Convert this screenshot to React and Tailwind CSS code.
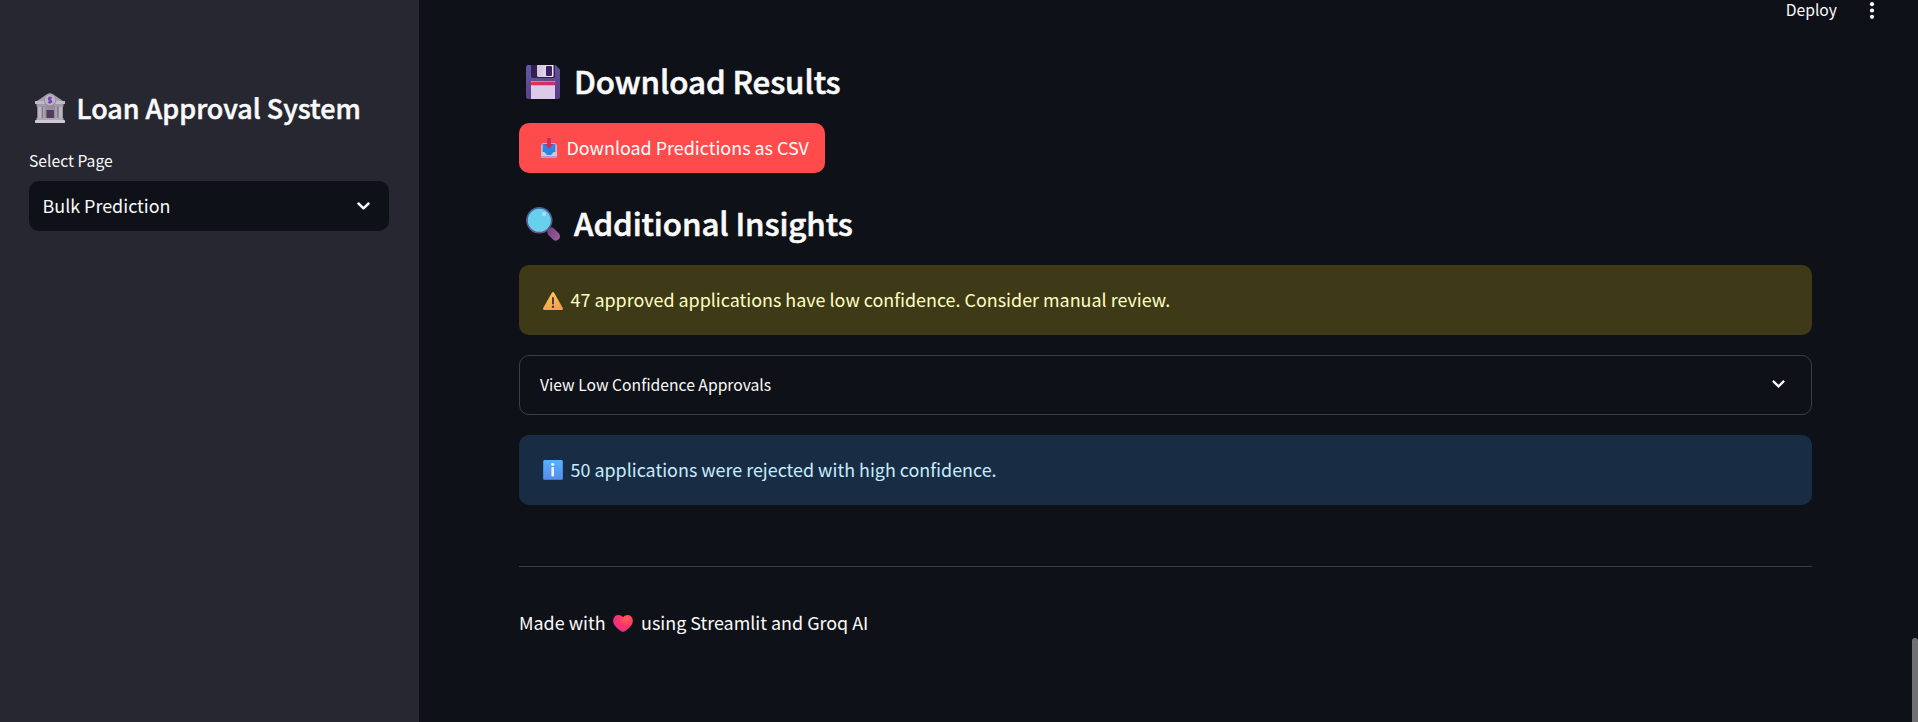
function BankIcon() {
  return (
    <svg viewBox="0 0 30 30" className="h-[30px] w-[30px] shrink-0">
      <rect x="2" y="12" width="26" height="15" fill="#857b8f" />
      <path d="M0.5 9 L12 1.2 Q15 -0.6 18 1.2 L29.5 9 Z" fill="#a79fae" />
      <rect x="0" y="8" width="30" height="3" fill="#c2b9c8" />
      <rect x="1.5" y="11" width="27" height="2.5" fill="#a299a9" />
      <rect x="3" y="13.5" width="3.6" height="12.5" fill="#bdb4c3" />
      <rect x="8" y="13.5" width="2.6" height="12.5" fill="#a79eae" />
      <rect x="19.6" y="13.5" width="2.6" height="12.5" fill="#a79eae" />
      <rect x="23.8" y="13.5" width="3.6" height="12.5" fill="#bdb4c3" />
      <rect x="10.6" y="14" width="9" height="12" fill="#998fa1" />
      <rect x="11.5" y="17" width="7.4" height="9.5" fill="#4e3c58" />
      <rect x="1.5" y="25" width="27" height="2.4" fill="#b0a7b6" />
      <rect x="0" y="27" width="30" height="3" rx="0.4" fill="#d0c8d5" />
      <circle cx="15" cy="7.4" r="6" fill="#8f8698" />
      <circle cx="15" cy="7" r="5.4" fill="#bdb4c4" />
      <path d="M17 5.2 Q15 3.7 13.7 5 Q13 6.5 15 7 Q17.2 7.6 16.5 9 Q15 10.3 13 8.9 M15 3.4 V10.7" fill="none" stroke="#7443ad" strokeWidth="1.4" />
    </svg>
  );
}

function FloppyIcon() {
  return (
    <svg viewBox="0 0 34 34" className="h-[34px] w-[34px] shrink-0">
      <defs>
        <linearGradient id="disk" x1="0" y1="0" x2="0.3" y2="1">
          <stop offset="0" stopColor="#5f5ba6" />
          <stop offset="1" stopColor="#5b3f85" />
        </linearGradient>
        <linearGradient id="strip" x1="0" x2="1">
          <stop offset="0" stopColor="#f0333a" />
          <stop offset="1" stopColor="#c72b74" />
        </linearGradient>
        <linearGradient id="shutter" x1="0" x2="1">
          <stop offset="0" stopColor="#cfc5dc" />
          <stop offset="1" stopColor="#efe8f5" />
        </linearGradient>
      </defs>
      <path d="M2.5 0 H29.5 L34 4.5 V31.5 Q34 34 31.5 34 H2.5 Q0 34 0 31.5 V2.5 Q0 0 2.5 0 Z" fill="url(#disk)" />
      <path d="M5 0 H29 V11 Q29 13 27 13 H7 Q5 13 5 11 Z" fill="#33204f" />
      <path d="M11 0 H27.5 V10.5 Q27.5 12 26 12 H12.5 Q11 12 11 10.5 Z" fill="url(#shutter)" />
      <rect x="20" y="1" width="6" height="10" rx="1" fill="#3c2263" />
      <rect x="5" y="16" width="24" height="18" fill="#dccbe8" />
      <path d="M5 20.3 V17.5 Q5 16.5 6 16.5 H28 Q29 16.5 29 17.5 V20.3 Z" fill="url(#strip)" />
    </svg>
  );
}

function InboxIcon() {
  return (
    <svg viewBox="0 0 16 20" className="h-5 w-4 shrink-0">
      <path d="M2 5 H14 L16 7 V19 Q16 20 15 20 H1 Q0 20 0 19 V7 Z" fill="#b9b5d8" />
      <rect x="1.8" y="6" width="12.4" height="9" fill="#2f86dc" />
      <path d="M0.3 14 H3.5 L6 17 H10 L12.5 14 H15.7 V18.5 H0.3 Z" fill="#cfc6e4" />
      <path d="M3.5 14 H12.5 L10 17 H6 Z" fill="#2f86dc" />
      <rect x="0.3" y="18" width="15.4" height="2" rx="0.5" fill="#b59ccb" />
      <path d="M6.1 0.8 Q6.1 0 7 0 H9 Q9.9 0 9.9 0.8 V6 H12.2 L8 10.8 L3.8 6 H6.1 Z" fill="#c92d62" />
    </svg>
  );
}

function MagnifierIcon() {
  return (
    <svg viewBox="0 0 34 34" className="h-[34px] w-[34px] shrink-0">
      <defs>
        <linearGradient id="ring" x1="0" y1="0" x2="0" y2="1">
          <stop offset="0" stopColor="#46639c" />
          <stop offset="1" stopColor="#70508f" />
        </linearGradient>
        <linearGradient id="handle" x1="0" y1="0" x2="1" y2="1">
          <stop offset="0" stopColor="#71407c" />
          <stop offset="1" stopColor="#a0609e" />
        </linearGradient>
      </defs>
      <path d="M21.5 23.5 L25.5 20 Q27 20.5 28.5 22 L33 26.5 Q35 29.5 33 32 Q30.5 35 27.5 33 L22 27.5 Q21 25.5 21.5 23.5 Z" fill="url(#handle)" />
      <circle cx="13.3" cy="13.3" r="13.2" fill="url(#ring)" />
      <circle cx="13.3" cy="13.3" r="11.5" fill="#67d0ed" />
      <circle cx="18" cy="7" r="2.2" fill="#b5d6f4" />
    </svg>
  );
}

function WarningIcon() {
  return (
    <svg viewBox="0 0 20 18" className="h-[18px] w-5 shrink-0">
      <defs>
        <linearGradient id="warn" x1="0" y1="0" x2="0.3" y2="1">
          <stop offset="0" stopColor="#ffce55" />
          <stop offset="1" stopColor="#f9a04e" />
        </linearGradient>
      </defs>
      <path d="M8.9 0.8 Q10 -0.6 11.1 0.8 L19.8 16 Q20.4 18 18.6 18 H1.4 Q-0.4 18 0.2 16 Z" fill="url(#warn)" />
      <rect x="9" y="5" width="2" height="7.5" rx="0.9" fill="#4b3a50" />
      <circle cx="10" cy="14.8" r="1.2" fill="#4b3a50" />
    </svg>
  );
}

function InfoIcon() {
  return (
    <svg viewBox="0 0 20 20" className="h-5 w-5 shrink-0">
      <defs>
        <linearGradient id="info" x1="0" y1="0" x2="0" y2="1">
          <stop offset="0" stopColor="#55b2ff" />
          <stop offset="1" stopColor="#568fe8" />
        </linearGradient>
      </defs>
      <rect width="20" height="20" rx="1.5" fill="#4279cf" />
      <rect x="0.6" y="0" width="18.8" height="19" rx="1.3" fill="url(#info)" />
      <circle cx="9.7" cy="4.3" r="1.5" fill="#fff" />
      <rect x="8.4" y="7" width="2.6" height="9.5" rx="1.2" fill="#f4eefc" />
    </svg>
  );
}

function HeartIcon() {
  return (
    <svg viewBox="0 0 20 17" className="h-[17px] w-5 shrink-0">
      <defs>
        <radialGradient id="heart" cx="0.68" cy="0.25" r="0.8">
          <stop offset="0" stopColor="#ff5f54" />
          <stop offset="0.5" stopColor="#fc3566" />
          <stop offset="1" stopColor="#e32c94" />
        </radialGradient>
      </defs>
      <path d="M10 2.3 C8 -0.5 3.5 -0.8 1.4 1.9 C-0.8 5 0 8.8 3 12 C5 14.2 7.2 15.6 8.8 16.6 Q10 17.3 11.2 16.6 C12.8 15.6 15 14.2 17 12 C20 8.8 20.8 5 18.6 1.9 C16.5 -0.8 12 -0.5 10 2.3 Z" fill="url(#heart)" />
    </svg>
  );
}

function Chevron({ rounded }) {
  return (
    <svg viewBox="0 0 13 8" className="h-2 w-[13px] shrink-0">
      <path
        d={rounded ? "M1.5 1.5 L6.5 6.3 L11.5 1.5" : "M0.9 0.9 L6.5 6.4 L12.1 0.9"}
        fill="none"
        stroke="#fafafa"
        strokeWidth={rounded ? 2.5 : 2.2}
        strokeLinecap={rounded ? "round" : "butt"}
        strokeLinejoin={rounded ? "round" : "miter"}
      />
    </svg>
  );
}

export default function App() {
  return (
    <div className="relative flex h-[722px] w-full overflow-hidden bg-[#0e1117] font-['Noto_Sans_CJK_SC',sans-serif] text-[17.92px] whitespace-nowrap text-[#fafafa]">
      <aside className="flex w-[419px] shrink-0 flex-col bg-[#262730] px-[29px] pt-[84px]">
        <h1 className="flex h-12 items-center pl-[5.5px] text-[26.9px] leading-[48px] font-medium [-webkit-text-stroke:0.5px_#fafafa]">
          <BankIcon />
          <span className="ml-3">Loan Approval System</span>
        </h1>
        <label className="mt-[15px] h-7 text-[15.7px] leading-7">Select Page</label>
        <div className="mt-1.5 flex h-[50px] w-[360px] items-center justify-between rounded-[10px] bg-[#0e1117] pr-[19px] pl-[13.5px]">
          <span className="pb-0.5">Bulk Prediction</span>
          <Chevron rounded />
        </div>
      </aside>

      <main className="flex flex-1 flex-col pt-[58px] pr-[106px] pl-[100px]">
        <h2 className="flex h-12 items-center pl-[7px] text-[31.3px] font-medium tracking-[-0.09px] [-webkit-text-stroke:0.6px_#fafafa]">
          <FloppyIcon />
          <span className="ml-3.5 pb-0.5">Download Results</span>
        </h2>
        <button className="mt-[17px] flex h-[50px] w-[306px] items-center rounded-[10px] bg-[#ff4b4b] pl-[22px] text-white">
          <InboxIcon />
          <span className="ml-[9.5px] pb-0.5">Download Predictions as CSV</span>
        </button>
        <h2 className="mt-[27px] flex h-12 items-center pl-[7px] text-[31.3px] font-medium tracking-[-0.09px] [-webkit-text-stroke:0.6px_#fafafa]">
          <MagnifierIcon />
          <span className="ml-3.5 pb-0.5">Additional Insights</span>
        </h2>
        <div className="mt-[17px] flex h-[70px] items-center rounded-[10px] bg-[#3e3917] pl-6 text-[#ffffc2]">
          <span className="pt-0.5">
            <WarningIcon />
          </span>
          <span className="ml-[7.5px] pb-0.5">47 approved applications have low confidence. Consider manual review.</span>
        </div>
        <div className="mt-5 flex h-[60px] items-center justify-between rounded-[10px] border border-[#3c3e43] pr-[26px] pl-5 text-[15.7px]">
          <span>View Low Confidence Approvals</span>
          <span className="pb-0.5">
            <Chevron />
          </span>
        </div>
        <div className="mt-5 flex h-[70px] items-center rounded-[10px] bg-[#182d43] pl-6 text-[#c7ebff]">
          <InfoIcon />
          <span className="ml-[7.5px] pb-0.5">50 applications were rejected with high confidence.</span>
        </div>
        <hr className="mt-[61px] border-t border-[#3c3e43]" />
        <p className="mt-10 flex h-[30px] items-center leading-[30px]">
          <span>Made with</span>
          <span className="mr-2 ml-[7.5px] pt-0.5">
            <HeartIcon />
          </span>
          <span>using Streamlit and Groq AI</span>
        </p>
      </main>

      <div className="absolute top-0 right-[43.5px] flex h-5 items-center">
        <span className="text-[15.7px] leading-5">Deploy</span>
        <svg viewBox="0 0 6 20" className="ml-[31.5px] h-5 w-1.5">
          <circle cx="3" cy="4.2" r="2.1" fill="#fafafa" />
          <circle cx="3" cy="10.5" r="2.1" fill="#fafafa" />
          <circle cx="3" cy="16.8" r="2.1" fill="#fafafa" />
        </svg>
      </div>
      <div className="absolute right-0 bottom-0 h-[84px] w-1.5 rounded-t-[3px] bg-[#6f7074]" />
    </div>
  );
}
